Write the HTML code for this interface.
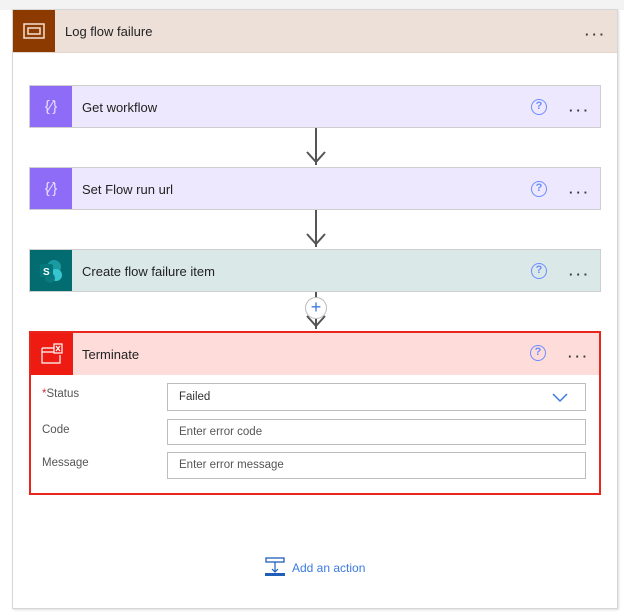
<!DOCTYPE html>
<html><head><style>
*{box-sizing:border-box;margin:0;padding:0}
body{width:624px;height:616px;background:#fff;font-family:"Liberation Sans",sans-serif;position:relative;overflow:hidden}
.top{position:absolute;left:0;top:0;width:624px;height:10px;background:#f3f3f3}
.outer{position:absolute;left:12px;top:9px;width:606px;height:600px;border:1px solid #d6d6d6;background:#fff;box-shadow:1px 1px 2px #ddd}
.hdr{position:absolute;left:0;top:0;width:604px;height:43px;background:#ede0d8;border-bottom:1px solid #e6d6cc}
.ico{position:absolute;left:0;top:0;width:42px;height:42px;display:flex;align-items:center;justify-content:center}
.t{position:absolute;font-size:13px;color:#222}
.dots{position:absolute;font-size:13px;letter-spacing:3px;color:#333;font-weight:bold}
.card{position:absolute;left:29px;width:572px;height:43px;border:1px solid #cfcfcf}
.q{position:absolute;width:16px;height:16px;border:1.5px solid #6b8cff;border-radius:50%;color:#6b8cff;font-size:11px;text-align:center;line-height:13px;font-weight:bold}
.line{position:absolute;left:315px;width:2px;background:#555}
.lbl{position:absolute;font-size:11.5px;color:#555}
.inp{position:absolute;left:167px;width:419px;border:1px solid #bdbdbd;font-size:11.5px;color:#333;padding-left:11px}
</style></head><body>
<div class="top"></div>
<div class="outer">
 <div class="hdr">
  <div class="ico" style="background:#8c3a00"><svg width="22" height="16"><rect x="1" y="1" width="20" height="14" fill="none" stroke="#f4e0d4" stroke-width="1.5"/><rect x="5" y="5" width="12" height="6" fill="none" stroke="#f4e0d4" stroke-width="1.5"/></svg></div>
  <div class="t" style="left:52px;top:14px">Log flow failure</div>
  <div class="dots" style="left:572px;top:17px">···</div>
 </div>
</div>
<div class="line" style="top:127px;height:38px"></div>
<svg style="position:absolute;left:305px;top:150px" width="22" height="16"><path d="M2 2 L11 12 L20 2" fill="none" stroke="#555" stroke-width="2"/></svg>
<div class="line" style="top:209px;height:38px"></div>
<svg style="position:absolute;left:305px;top:232px" width="22" height="16"><path d="M2 2 L11 12 L20 2" fill="none" stroke="#555" stroke-width="2"/></svg>
<div class="line" style="top:291px;height:38px"></div>
<svg style="position:absolute;left:305px;top:314px" width="22" height="16"><path d="M2 2 L11 12 L20 2" fill="none" stroke="#555" stroke-width="2"/></svg>
<div style="position:absolute;left:305px;top:297px;width:22px;height:22px;border:1px solid #bbb;border-radius:50%;background:#fff;color:#3b7be0;font-size:18px;text-align:center;line-height:19px">+</div>

<div class="card" style="top:85px;background:#ede8fd">
 <div class="ico" style="background:#8f6cf7;width:42px;height:41px"><span style="color:#e8e0ff;font-size:15px">{⁄}</span></div>
 <div class="t" style="left:52px;top:14px">Get workflow</div>
 <div class="q" style="left:501px;top:13px">?</div>
 <div class="dots" style="left:539px;top:17px">···</div>
</div>
<div class="card" style="top:167px;background:#ede8fd">
 <div class="ico" style="background:#8f6cf7;width:42px;height:41px"><span style="color:#e8e0ff;font-size:15px">{⁄}</span></div>
 <div class="t" style="left:52px;top:14px">Set Flow run url</div>
 <div class="q" style="left:501px;top:13px">?</div>
 <div class="dots" style="left:539px;top:17px">···</div>
</div>
<div class="card" style="top:249px;background:#dbe8e8">
 <div class="ico" style="background:#036c70;width:42px;height:41px"><svg width="26" height="24"><circle cx="16" cy="8" r="7" fill="#1a9ba1"/><circle cx="18" cy="16" r="6" fill="#37c6d0"/><circle cx="12" cy="19" r="5" fill="#0b7a80"/><rect x="2" y="5" width="13" height="13" rx="2" fill="#03787c"/><text x="5" y="16" font-size="10" fill="#fff" font-family="Liberation Sans" font-weight="bold">S</text></svg></div>
 <div class="t" style="left:52px;top:14px">Create flow failure item</div>
 <div class="q" style="left:501px;top:13px">?</div>
 <div class="dots" style="left:539px;top:17px">···</div>
</div>
<div class="card" style="top:331px;height:164px;border:2px solid #e8261d;background:#fff">
 <div style="position:absolute;left:0;top:0;width:568px;height:42px;background:#fddcda"></div>
 <div class="ico" style="background:#ee1b12;width:42px;height:42px"><svg width="24" height="22"><path d="M2 5 H14 M2 5 V20 H20 V12 M2 9 H14" fill="none" stroke="#fff" stroke-width="1.2"/><rect x="14" y="1" width="8" height="9" fill="none" stroke="#fff" stroke-width="1.2"/><path d="M16 3 L20 8 M20 3 L16 8" stroke="#fff" stroke-width="1.2"/></svg></div>
 <div class="t" style="left:51px;top:14px">Terminate</div>
 <div class="q" style="left:499px;top:12px">?</div>
 <div class="dots" style="left:537px;top:16px">···</div>
</div>
<div class="lbl" style="left:42px;top:388px"><span style="color:#d13438">*</span>Status</div>
<div class="lbl" style="left:42px;top:424px">Code</div>
<div class="lbl" style="left:42px;top:457px">Message</div>
<div class="inp" style="top:383px;height:28px;line-height:26px">Failed<svg style="position:absolute;right:17px;top:9px" width="16" height="10"><path d="M1 1 L8 8 L15 1" fill="none" stroke="#3b7be0" stroke-width="1.5"/></svg></div>
<div class="inp" style="top:419px;height:26px;line-height:24px;color:#555">Enter error code</div>
<div class="inp" style="top:452px;height:27px;line-height:25px;color:#555">Enter error message</div>

<svg style="position:absolute;left:265px;top:557px" width="22" height="22"><rect x="1" y="1" width="18" height="4" fill="none" stroke="#1f5fb8" stroke-width="1.3"/><path d="M10 5 V15 M7 12 L10 15 L13 12" fill="none" stroke="#1f5fb8" stroke-width="1.2"/><rect x="0" y="16" width="20" height="3" fill="#1f5fb8"/></svg>
<div style="position:absolute;left:292px;top:561px;font-size:12px;color:#3b7be0">Add an action</div>
</body></html>
